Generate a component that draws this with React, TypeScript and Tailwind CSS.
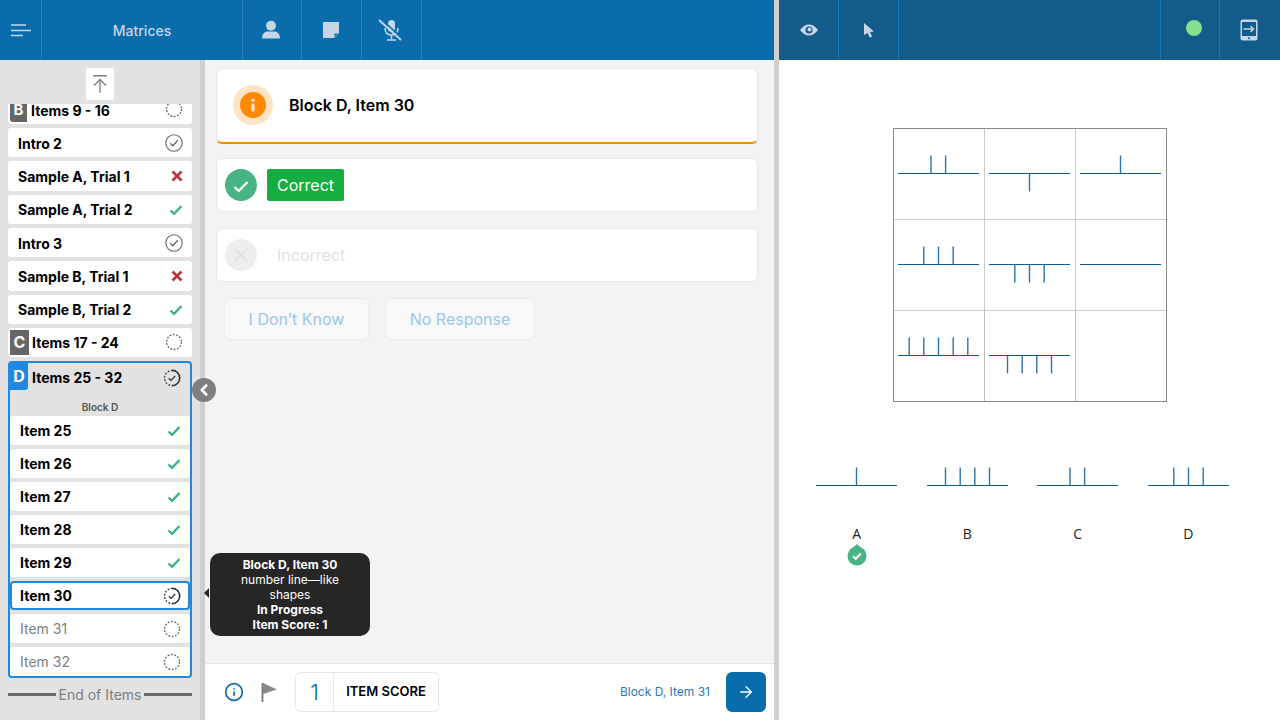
import { ArrowRight, ArrowUpToLine, ChevronLeft, Info, X } from 'lucide-react';

const font = "font-['Inter','Noto_Sans',sans-serif]";

const DashedCircle = () => (
  <svg width="18" height="18" viewBox="0 0 18 18">
    <circle cx="9" cy="9" r="7.5" fill="none" stroke="#666" strokeWidth="1.4" strokeDasharray="1.8 1.6" />
  </svg>
);

const DoneCircle = () => (
  <svg width="18" height="18" viewBox="0 0 18 18">
    <circle cx="9" cy="9" r="8.2" fill="none" stroke="#666" strokeWidth="1.1" />
    <path d="M5.2 9.2l2.6 2.6 5-5.6" fill="none" stroke="#666" strokeWidth="1.3" />
  </svg>
);

const ProgressCircle = () => (
  <svg width="18" height="18" viewBox="0 0 18 18">
    <circle cx="9" cy="9" r="7.5" fill="none" stroke="#444" strokeWidth="1.4" strokeDasharray="1.8 1.6" />
    <path d="M9 1.2a7.8 7.8 0 0 1 0 15.6" fill="none" stroke="#333" strokeWidth="1.4" />
    <path d="M5.8 9.2l2.2 2.2 4.2-4.4" fill="none" stroke="#333" strokeWidth="1.3" />
  </svg>
);

const GreenCheck = () => (
  <svg width="14" height="12" viewBox="0 0 14 12">
    <path d="M1.5 6.5l3.600 3.400L12.500 2" fill="none" stroke="#3fb27f" strokeWidth="2.4" />
  </svg>
);

const RedX = () => (
  <svg width="12" height="12" viewBox="0 0 12 12">
    <path d="M1.500 1.500l9 9M10.500 1.500l-9 9" fill="none" stroke="#b8333b" strokeWidth="2.600" />
  </svg>
);

const statusIcon = (status: string) => {
  if (status === 'done') return <DoneCircle />;
  if (status === 'yes') return <GreenCheck />;
  if (status === 'no') return <RedX />;
  if (status === 'progress') return <ProgressCircle />;
  return <DashedCircle />;
};

const topRows = [
  { label: 'Intro 2', status: 'done' },
  { label: 'Sample A, Trial 1', status: 'no' },
  { label: 'Sample A, Trial 2', status: 'yes' },
  { label: 'Intro 3', status: 'done' },
  { label: 'Sample B, Trial 1', status: 'no' },
  { label: 'Sample B, Trial 2', status: 'yes' },
];

const blockRows = [
  { label: 'Item 25', status: 'yes' },
  { label: 'Item 26', status: 'yes' },
  { label: 'Item 27', status: 'yes' },
  { label: 'Item 28', status: 'yes' },
  { label: 'Item 29', status: 'yes' },
];

// x positions of the ticks, relative to an 81 wide line
const Figure = ({ ticks, down }: { ticks: number[]; down?: boolean }) => (
  <svg width="81" height="38" viewBox="0 0 81 38" className="block">
    <path d="M0 19.5h81" stroke="#0f5c94" strokeWidth="1.2" />
    {ticks.map((t) => (
      <path key={t} d={down ? `M${t} 19.5v18` : `M${t} 1.5v18`} stroke="#2f74a8" strokeWidth="1.4" />
    ))}
  </svg>
);

const cells = [
  { ticks: [33, 47.6] },
  { ticks: [40.5], down: true },
  { ticks: [40.5] },
  { ticks: [25.8, 40.5, 55.2] },
  { ticks: [25.8, 40.5, 55.2], down: true },
  { ticks: [] },
  { ticks: [11.2, 25.8, 40.5, 55.2, 69.8] },
  { ticks: [18.5, 33.2, 47.8, 62.5], down: true },
  null,
];

const options = [
  { label: 'A', ticks: [40.5] },
  { label: 'B', ticks: [18.5, 33.2, 47.8, 62.5] },
  { label: 'C', ticks: [33, 47.6] },
  { label: 'D', ticks: [25.8, 40.5, 55.2] },
];

const HeadCell = ({ children, w }: { children: React.ReactNode; w: string }) => (
  <div className={`${w} h-full flex items-center justify-center border-r border-[#2c80b8]`}>{children}</div>
);

const App = () => {
  return (
    <div className={`${font} w-[1280px] h-[720px] flex overflow-hidden bg-white text-black`}>
      {/* Left side */}
      <div className="w-[774px] h-full flex flex-col shrink-0">
        <div className="h-[60px] bg-[#0a6caa] flex shrink-0 text-[#c5d6e6]">
          <HeadCell w="w-[42px]">
            <svg width="20" height="13" viewBox="0 0 20 13" className="mt-[1px]">
              <path d="M0 1h15M0 6.500h20M0 11.500h12" stroke="#c5d6e6" strokeWidth="1.600" />
            </svg>
          </HeadCell>
          <HeadCell w="w-[201px]">
            <span className="text-sm font-medium pt-[2px]">Matrices</span>
          </HeadCell>
          <HeadCell w="w-[59px]">
            <svg width="20" height="20" viewBox="0 0 20 20" className="mr-[2px] -mt-[1px]">
              <circle cx="10" cy="5.800" r="5" fill="#c5d6e6" />
              <path d="M1 18.500c0-5 3-7 5-7h8c2 0 5 2 5 7z" fill="#c5d6e6" />
            </svg>
          </HeadCell>
          <HeadCell w="w-[60px]">
            <svg width="18" height="18" viewBox="0 0 18 18" className="mr-[2px]">
              <path d="M1 1h16v11l-5 5H1z" fill="#c5d6e6" />
              <path d="M12.500 16v-3.500h3.500z" fill="#0a6caa" />
            </svg>
          </HeadCell>
          <HeadCell w="w-[60px]">
            <svg width="26" height="24" viewBox="0 0 26 24" className="mr-[2px]">
              <rect x="10" y="2" width="7" height="12" rx="3.500" fill="#c5d6e6" />
              <path d="M7 10c0 5 3 7 6.500 7s6.500-2 6.500-7M13.500 17v4M9 22h9" fill="none" stroke="#c5d6e6" strokeWidth="1.600" />
              <path d="M2.500 0.500l22 20" stroke="#0a6caa" strokeWidth="1.600" />
              <path d="M1 2l22 20" stroke="#c5d6e6" strokeWidth="2" />
            </svg>
          </HeadCell>
        </div>
        <div className="flex-1 flex min-h-0 relative">
          {/* Sidebar */}
          <div className="w-[205px] shrink-0 bg-[#e2e2e2] border-r-[5px] border-[#cfcfcf] flex flex-col">
            <div className="h-[44px] shrink-0 flex justify-center pt-2">
              <div className="w-[28px] h-[32px] bg-white rounded-[2px] flex items-center justify-center">
                <ArrowUpToLine size={22} color="#808080" strokeWidth={1.500} />
              </div>
            </div>
            <div className="h-[574px] overflow-hidden px-2">
              <div className="-mt-[11px] flex flex-col gap-[4px]">
                <div className="h-[31px] bg-white rounded-[3px] flex items-center">
                  <div className="w-[17px] h-[27px] ml-[2px] self-end mb-[2px] pt-[3px] bg-[#666] rounded-bl-[3px] text-white font-bold text-[15px] flex items-center justify-center">B</div>
                  <span className="ml-[4px] pt-[3px] text-[14px] font-bold">Items 9 - 16</span>
                  <div className="ml-auto mr-[9px] flex"><DashedCircle /></div>
                </div>
                {topRows.map((r) => (
                  <div key={r.label} className="h-[29.33px] pt-[1px] bg-white rounded-[3px] flex items-center pl-[10px]">
                    <span className="text-[14px] font-bold">{r.label}</span>
                    <div className="ml-auto w-[18px] mr-[9px] flex justify-end">{statusIcon(r.status)}</div>
                  </div>
                ))}
                <div className="h-[29px] bg-white rounded-[3px] flex items-center">
                  <div className="w-[19px] h-[25px] ml-[2px] bg-[#666] text-white font-bold text-base flex items-center justify-center">C</div>
                  <span className="ml-[3px] text-[14px] font-bold">Items 17 - 24</span>
                  <div className="ml-auto mr-[9px] flex"><DashedCircle /></div>
                </div>
                <div className="border-2 border-[#2188dc] rounded-[4px] flex flex-col">
                  <div className="h-[30px] flex items-start shrink-0">
                    <div className="w-[18px] h-[27px] bg-[#2188dc] text-white font-bold text-base rounded-br-[3px] flex items-center justify-center">D</div>
                    <span className="ml-[4px] h-[30px] flex items-center text-[14px] font-bold">Items 25 - 32</span>
                    <div className="ml-auto mr-[9px] h-[30px] flex items-center"><ProgressCircle /></div>
                  </div>
                  <div className="h-[23px] shrink-0 flex items-end justify-center pb-[3px] text-[10px] leading-[12px] font-semibold text-[#555]">Block D</div>
                  <div className="flex flex-col gap-[4px]">
                    {blockRows.map((r) => (
                      <div key={r.label} className="h-[29px] pt-[1px] bg-white rounded-[3px] flex items-center pl-[10px]">
                        <span className="text-[14px] font-bold">{r.label}</span>
                        <div className="ml-auto w-[18px] mr-[9px] flex justify-end">{statusIcon(r.status)}</div>
                      </div>
                    ))}
                    <div className="h-[29px] pt-[1px] bg-white rounded-[4px] border-2 border-[#2188dc] flex items-center pl-[8px]">
                      <span className="text-[14px] font-bold">Item 30</span>
                      <div className="ml-auto mr-[7px] flex"><ProgressCircle /></div>
                    </div>
                    {['Item 31', 'Item 32'].map((t) => (
                      <div key={t} className="h-[29px] pt-[1px] bg-white rounded-[3px] flex items-center pl-[10px]">
                        <span className="text-[14px] text-[#808080]">{t}</span>
                        <div className="ml-auto mr-[9px] flex"><DashedCircle /></div>
                      </div>
                    ))}
                  </div>
                </div>
              </div>
            </div>
            <div className="flex items-center px-2 gap-[3px] mt-[8px] text-[14px] leading-[17px] text-[#808080]">
              <div className="flex-1 h-[3px] bg-[#6b6b6b]" />
              <span>End of Items</span>
              <div className="flex-1 h-[3px] bg-[#6b6b6b]" />
            </div>
          </div>

          {/* Middle */}
          <div className="flex-1 flex flex-col bg-[#f3f3f3] min-w-0">
            <div className="flex-1 pt-2 pl-[11px] pr-[16px] flex flex-col">
              <div className="h-[76px] bg-white rounded-[6px] border border-[#e4e7ee] border-b-2 border-b-[#ff8a00] flex items-center pl-4 pb-[1px]">
                <div className="w-10 h-10 rounded-full bg-[#ffe3c6] flex items-center justify-center">
                  <div className="w-[26px] h-[26px] rounded-full bg-[#ff8a00] flex items-center justify-center">
                    <svg width="6" height="14" viewBox="0 0 6 14">
                      <circle cx="3" cy="2.200" r="1.700" fill="#ffe3c6" />
                      <rect x="1.400" y="5.500" width="3.200" height="8" rx="1" fill="#ffe3c6" />
                    </svg>
                  </div>
                </div>
                <span className="ml-4 text-base font-semibold">Block D, Item 30</span>
              </div>
              <div className="mt-[14px] h-[54px] bg-white rounded-[6px] border border-[#e4e7ee] flex items-center pl-2">
                <div className="w-8 h-8 rounded-full bg-[#48b483] flex items-center justify-center">
                  <svg width="16" height="13" viewBox="0 0 16 13" className="mt-[2px]">
                    <path d="M1.500 7l4.200 4L14.500 2" fill="none" stroke="#fff" strokeWidth="2.200" />
                  </svg>
                </div>
                <div className="ml-[10px] w-[77px] h-8 bg-[#16ad41] rounded-[2px] text-white text-base flex items-center justify-center">Correct</div>
              </div>
              <div className="mt-[16px] h-[54px] bg-white rounded-[6px] border border-[#e4e7ee] flex items-center pl-2">
                <div className="w-8 h-8 rounded-full bg-[#eeeeee] flex items-center justify-center">
                  <X size={24} color="#dcdcdc" strokeWidth={1.300} />
                </div>
                <span className="ml-[20px] text-base text-[#e2e0e0]">Incorrect</span>
              </div>
              <div className="mt-4 ml-2 flex gap-4">
                <div className="w-[145px] h-[42px] bg-[#f8f8f9] rounded-[6px] border border-[#ececf0] text-base text-[#9cc7ea] flex items-center justify-center">I Don’t Know</div>
                <div className="w-[150px] h-[42px] bg-[#f8f8f9] rounded-[6px] border border-[#ececf0] text-base text-[#9cc7ea] flex items-center justify-center">No Response</div>
              </div>
            </div>
            <div className="h-[57px] shrink-0 bg-white border-t border-[#e4e4e4] flex items-center pl-[19px] pr-[8px]">
              <Info size={20} color="#0a6caa" strokeWidth={2} />
              <svg width="18" height="20" viewBox="0 0 18 20" className="ml-[17px]">
                <path d="M1.500 1v19" stroke="#777" strokeWidth="1.800" />
                <path d="M2 1l14 6.500L2 12z" fill="#8a8a8a" />
              </svg>
              <div className="ml-[16px] w-[144px] h-10 rounded-[6px] border border-[#e4e7ee] flex items-center">
                <div className="w-[38px] h-full flex items-center justify-center border-r border-[#e4e7ee] text-[22px] font-light text-[#0a6caa]">1</div>
                <span className="flex-1 text-center text-[13px] font-semibold">ITEM SCORE</span>
              </div>
              <span className="ml-auto text-[12px] text-[#2d79b5]">Block D, Item 31</span>
              <div className="ml-4 w-10 h-10 bg-[#0a6caa] rounded-[6px] flex items-center justify-center">
                <ArrowRight size={18} color="#ffffff" strokeWidth={1.700} />
              </div>
            </div>
          </div>

          {/* Collapse handle */}
          <div className="absolute left-[192px] top-[318px] w-6 h-6 rounded-full bg-[#7f7f7f] flex items-center justify-center">
            <ChevronLeft size={18} color="#fff" strokeWidth={3.500} />
          </div>

          {/* Tooltip */}
          <div className="absolute left-[210px] top-[493px] w-[160px] h-[83px] bg-[#262626] rounded-[10px] text-white text-[12px] leading-[15px] text-center flex flex-col justify-center px-4">
            <div className="font-bold">Block D, Item 30</div>
            <div>number line—like shapes</div>
            <div className="font-bold">In Progress</div>
            <div className="font-bold">Item Score: 1</div>
            <div className="absolute left-[-6px] top-[35px] w-0 h-0 border-y-[5px] border-y-transparent border-r-[5px] border-r-[#262626]" />
          </div>
        </div>
      </div>

      <div className="w-[5px] h-full bg-[#cfcfcf] shrink-0" />

      {/* Right side */}
      <div className="flex-1 h-full flex flex-col min-w-0">
        <div className="h-[60px] bg-[#125b8a] flex shrink-0">
          <div className="w-[60px] h-full flex items-center justify-center border-r border-[#1a76b5]">
            <svg width="20" height="14" viewBox="0 0 20 14">
              <path d="M1 7c2.500-3.500 5.500-5.500 9-5.500s6.500 2 9 5.500c-2.500 3.500-5.500 5.500-9 5.500S3.500 10.500 1 7z" fill="#c5d6e6" />
              <circle cx="10" cy="7" r="3.600" fill="#125b8a" />
              <circle cx="10.500" cy="6.500" r="2" fill="#c5d6e6" />
            </svg>
          </div>
          <div className="w-[60px] h-full flex items-center justify-center border-r border-[#1a76b5]">
            <svg width="12" height="16" viewBox="0 0 12 16">
              <path d="M1 1l10 8.500-4 .5 2.200 4.500-2.500 1-2-4.500L1 13z" fill="#c5d6e6" />
            </svg>
          </div>
          <div className="flex-1 border-r border-[#1a76b5]" />
          <div className="w-[59px] h-full flex justify-center pt-[20px] border-r border-[#1a76b5]">
            <div className="w-4 h-4 rounded-full bg-[#86e08f] ml-[7px]" />
          </div>
          <div className="w-[60px] h-full flex items-center justify-center pr-[2px]">
            <svg width="18" height="22" viewBox="0 0 18 22">
              <rect x="0.500" y="0.500" width="17" height="21" rx="2" fill="#c5d6e6" />
              <rect x="2" y="3" width="14" height="14" fill="#125b8a" />
              <circle cx="9" cy="19.300" r="1" fill="#125b8a" />
              <path d="M3.500 10h10M10.500 7l3 3-3 3" fill="none" stroke="#c5d6e6" strokeWidth="1.500" />
            </svg>
          </div>
        </div>
        <div className="flex-1 bg-white flex flex-col items-center">
          <div className="mt-[68px] w-[274px] h-[274px] grid grid-cols-[91px_91px_90px] grid-rows-[91px_91px_90px] border border-[#888] ml-[1px]">
            {cells.map((c, i) => (
              <div
                key={i}
                className={`flex items-start justify-center ${i % 3 !== 2 ? 'border-r border-[#bbb]' : ''} ${i < 6 ? 'border-b border-[#ccc]' : ''}`}
              >
                {c && (
                  <div className="mt-[25px] mr-[1px]">
                    <Figure ticks={c.ticks} down={c.down} />
                  </div>
                )}
              </div>
            ))}
          </div>
          <div className="mt-[64px] w-[442px] -ml-[14px] grid grid-cols-4">
            {options.map((o) => (
              <div key={o.label} className="flex flex-col items-center">
                <Figure ticks={o.ticks} />
                <span className="mt-[21px] font-['Open_Sans',sans-serif] text-[14px] leading-[18px] text-[#222]">{o.label}</span>
                {o.label === 'A' && (
                  <svg width="20" height="24" viewBox="0 0 20 24" className="-mt-[1px]">
                    <path d="M5.500 6l4.500-4 4.500 4z" fill="#48b483" />
                    <circle cx="10" cy="14" r="9.500" fill="#48b483" />
                    <path d="M6 14.200l2.800 2.600 5-5.300" fill="none" stroke="#fff" strokeWidth="2" />
                  </svg>
                )}
              </div>
            ))}
          </div>
        </div>
      </div>
    </div>
  );
};

export default App;
